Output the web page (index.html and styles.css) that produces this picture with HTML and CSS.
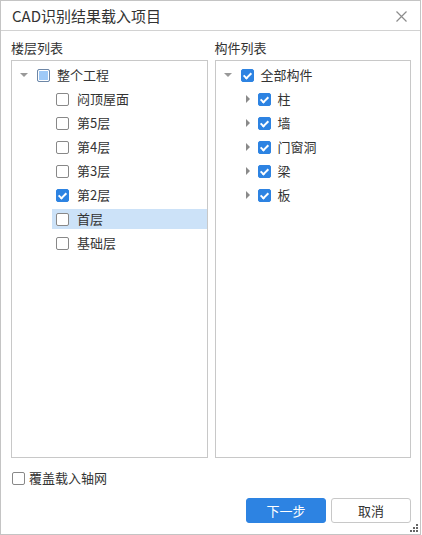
FILE: index.html
```html
<!DOCTYPE html>
<html lang="zh-CN">
<head>
    <meta charset="UTF-8">
    <title>CAD识别结果载入项目</title>
    <link rel="stylesheet" href="styles.css">
</head>
<body>
    <div class="dialog">
        <div class="title-bar">
            <span class="title">CAD识别结果载入项目</span>
            <svg class="close" width="11" height="11" viewBox="0 0 11 11">
                <path d="M0.5 0.5 L10.5 10.5 M10.5 0.5 L0.5 10.5" stroke="#8c8c8c" stroke-width="1.2" fill="none"/>
            </svg>
        </div>

        <div class="panels">
            <div class="panel">
                <div class="panel-label">楼层列表</div>
                <div class="tree-box">
                    <div class="row">
                        <span class="arrow down"></span>
                        <span class="cb partial"></span>
                        <span class="text">整个工程</span>
                    </div>
                    <div class="row floor"><span class="cb"></span><span class="text">闷顶屋面</span></div>
                    <div class="row floor"><span class="cb"></span><span class="text">第5层</span></div>
                    <div class="row floor"><span class="cb"></span><span class="text">第4层</span></div>
                    <div class="row floor"><span class="cb"></span><span class="text">第3层</span></div>
                    <div class="row floor"><span class="cb checked"></span><span class="text">第2层</span></div>
                    <div class="row floor selected"><span class="cb"></span><span class="text">首层</span></div>
                    <div class="row floor"><span class="cb"></span><span class="text">基础层</span></div>
                </div>
            </div>

            <div class="panel">
                <div class="panel-label">构件列表</div>
                <div class="tree-box">
                    <div class="row">
                        <span class="arrow down"></span>
                        <span class="cb checked"></span>
                        <span class="text">全部构件</span>
                    </div>
                    <div class="row part"><span class="arrow right"></span><span class="cb checked"></span><span class="text">柱</span></div>
                    <div class="row part"><span class="arrow right"></span><span class="cb checked"></span><span class="text">墙</span></div>
                    <div class="row part"><span class="arrow right"></span><span class="cb checked"></span><span class="text">门窗洞</span></div>
                    <div class="row part"><span class="arrow right"></span><span class="cb checked"></span><span class="text">梁</span></div>
                    <div class="row part"><span class="arrow right"></span><span class="cb checked"></span><span class="text">板</span></div>
                </div>
            </div>
        </div>

        <label class="option">
            <span class="cb"></span>
            <span>覆盖载入轴网</span>
        </label>

        <div class="footer">
            <button class="btn primary">下一步</button>
            <button class="btn">取消</button>
        </div>

        <svg class="grip" width="9" height="9" viewBox="0 0 9 9">
            <rect x="6" y="0" width="2" height="2" fill="#666"/>
            <rect x="3" y="3" width="2" height="2" fill="#666"/>
            <rect x="6" y="3" width="2" height="2" fill="#666"/>
            <rect x="0" y="6" width="2" height="2" fill="#666"/>
            <rect x="3" y="6" width="2" height="2" fill="#666"/>
            <rect x="6" y="6" width="2" height="2" fill="#666"/>
        </svg>
    </div>
</body>
</html>
```

FILE: styles.css
```css
* {
    margin: 0;
    padding: 0;
    box-sizing: border-box;
}

body {
    font-family: "Noto Sans CJK SC", "Liberation Sans", sans-serif;
    font-size: 13px;
    color: #333;
    background: #fff;
}

.dialog {
    position: relative;
    width: 421px;
    height: 535px;
    border: 1px solid #c4c4c4;
    display: flex;
    flex-direction: column;
}

.title-bar {
    height: 30px;
    border-bottom: 1px solid #d2d2d2;
    display: flex;
    align-items: center;
    justify-content: space-between;
    padding: 0 13px 0 11px;
    flex-shrink: 0;
}

.title {
    font-size: 15px;
    line-height: 20px;
    color: #333;
}

.close {
    margin-top: 2px;
}

.panels {
    display: flex;
    gap: 7px;
    padding: 8px 9px 0 10px;
}

.panel {
    flex: 1;
    display: flex;
    flex-direction: column;
}

.panel-label {
    line-height: 18px;
    margin-bottom: 3px;
}

.tree-box {
    height: 398px;
    border: 1px solid #c8c8c8;
    padding-top: 4px;
    display: flex;
    flex-direction: column;
    gap: 4px;
}

.row {
    height: 20px;
    display: flex;
    align-items: center;
    padding-left: 6px;
}

.row .text {
    margin-left: 7px;
    line-height: 20px;
}

.row.floor {
    margin-left: 40px;
    padding-left: 4px;
}

.row.floor .text {
    margin-left: 8px;
}

.row.part {
    padding-left: 26px;
}

.row.part .cb {
    margin-left: 4px;
}

.row.selected {
    background: #cce2f8;
}

.arrow {
    width: 12px;
    height: 12px;
    display: flex;
    align-items: center;
    justify-content: center;
}

.arrow::before {
    content: '';
    border-style: solid;
    border-color: transparent;
}

.arrow.down::before {
    border-width: 4px 4px 0 4px;
    border-top-color: #999;
}

.arrow.right::before {
    border-width: 4px 0 4px 4px;
    border-left-color: #8a8a8a;
}

.arrow.down + .cb {
    margin-left: 7px;
}

.cb {
    width: 13px;
    height: 13px;
    border: 1px solid #888;
    border-radius: 2px;
    background: #fff;
    flex-shrink: 0;
    position: relative;
}

.cb.partial {
    border-color: #6d86a6;
    background: #9ec9f7;
    box-shadow: inset 0 0 0 1px #fff;
}

.cb.checked {
    border-color: #2d83e2;
    background: #2d83e2;
}

.cb.checked::after {
    content: '';
    position: absolute;
    left: 3px;
    top: 1px;
    width: 3px;
    height: 6px;
    border-right: 2px solid #fff;
    border-bottom: 2px solid #fff;
    transform: rotate(45deg);
}

.option {
    display: flex;
    align-items: center;
    gap: 4px;
    height: 16px;
    margin: 12px 0 0 11px;
    line-height: 16px;
}

.footer {
    display: flex;
    justify-content: flex-end;
    gap: 5px;
    padding-right: 9px;
    margin-top: 12px;
}

.btn {
    width: 80px;
    height: 25px;
    border: 1px solid #c8c8c8;
    border-radius: 3px;
    background: #fff;
    font-family: inherit;
    font-size: 13px;
    color: #333;
}

.btn.primary {
    border-color: #2d83e2;
    background: #2d83e2;
    color: #fff;
}

.grip {
    position: absolute;
    right: 1px;
    bottom: 1px;
}
```
